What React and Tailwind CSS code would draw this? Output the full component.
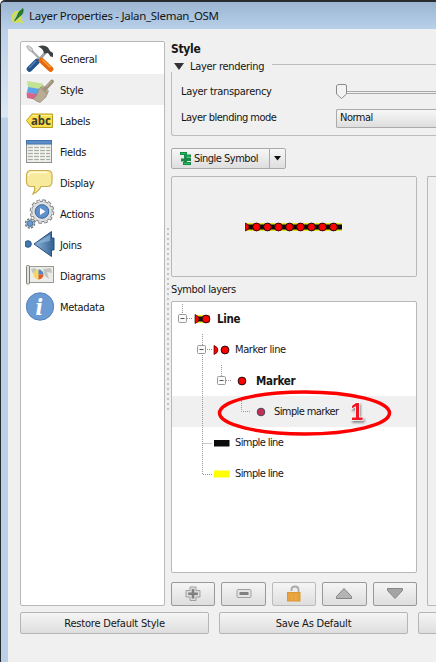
import React from "react";

function Tools() {
  return (
    <svg width="30" height="30" viewBox="0 0 30 30">
      <path d="M6 6 L15 15" stroke="#a9adb0" strokeWidth="2.2" />
      <path d="M1.5 2.500L3 1.500L7 4L8 8L4 6.500Z" fill="#d0d3d5" stroke="#8c9093" strokeWidth=".6" />
      <path d="M21 8 L13 17" stroke="#9da2a6" strokeWidth="2.800" />
      <path d="M12 17.500 L4.500 25" stroke="#24538d" strokeWidth="5.600" strokeLinecap="round" />
      <path d="M11 17 L4 24" stroke="#4d83bd" strokeWidth="1.500" />
      <path d="M16.500 16.500 L25.500 25" stroke="#e66a0a" strokeWidth="5.600" strokeLinecap="round" />
      <path d="M17 15.500 L25.500 23.500" stroke="#ff9c3c" strokeWidth="1.500" />
      <path d="M13 2.500Q19 0 23 3.500L25 7L28 9V13L25.500 12.500L23 9L19 9.500Q18.500 4.500 13 2.500Z" fill="#3c4144" />
    </svg>
  );
}
function Brush() {
  return (
    <svg width="30" height="30" viewBox="0 0 30 30">
      <path d="M2 6L18 8.500L15 14.500L3 12.500Z" fill="#c3e394" />
      <path d="M3 12L15 14L12 19.500L2 17.500Z" fill="#5aa5ea" />
      <path d="M1.500 17.500L12 19L16 26L2 23Z" fill="#d7668a" />
      <path d="M14 14L18 10.500L23.500 16L21 22L15 27.500Q10 26 8.500 23.500Q13 20 14 14Z" fill="#b8ac94" stroke="#8c826b" strokeWidth=".6" />
      <path d="M20.500 13.500L27 6.500" stroke="#9b8f76" strokeWidth="3.800" strokeLinecap="round" />
      <path d="M21 12L26.500 6" stroke="#c3b89f" strokeWidth="1" />
      <path d="M16 12.500L22 18.500" stroke="#857961" strokeWidth=".9" />
    </svg>
  );
}
function Abc() {
  return (
    <svg width="30" height="30" viewBox="0 0 30 30">
      <path d="M1.500 14.500L7 8H27.500V21.500H7Z" fill="#fbde4d" stroke="#b69c18" />
      <path d="M7.500 9.500H26.500" stroke="#fff3a2" />
      <text x="6" y="18.500" fontFamily="Noto Sans" fontWeight="bold" fontSize="11.500" letterSpacing="0" textLength="20" lengthAdjust="spacingAndGlyphs" fill="#3d3d2c">abc</text>
    </svg>
  );
}
function Table() {
  return (
    <svg width="30" height="30" viewBox="0 0 30 30">
      <rect x="1.500" y="3.500" width="25" height="22" fill="#e9ebe6" stroke="#8f928c" />
      <rect x="1.500" y="3.500" width="25" height="3.500" fill="#5c8dcb" stroke="#4472ad" />
      <path d="M3 10.500H25M3 13.500H25M3 16.500H25M3 19.500H25M3 22.500H25" stroke="#a9ada4" />
      <path d="M8.500 8V25M14.500 8V25M20.500 8V25" stroke="#f4f4f2" strokeWidth="1.200" />
    </svg>
  );
}
function Bubble() {
  return (
    <svg width="30" height="30" viewBox="0 0 30 30">
      <path d="M5 2.500H23Q27 3 27 7V14Q26.500 18.500 23 18.500H16Q14 23 8 26Q10.500 22 9.500 18.500H5Q2 18 1.500 14V7Q2 3 5 2.500Z" fill="#f7ea9c" stroke="#c9ae50" strokeWidth="1.200" />
      <path d="M3.500 8Q3.500 4.500 7 4.500H22" fill="none" stroke="#fffad2" strokeWidth="1.500" />
    </svg>
  );
}
function Gears() {
  return (
    <svg width="30" height="30" viewBox="0 0 30 30">
      <circle cx="17" cy="12.500" r="11" fill="none" stroke="#777a7d" strokeWidth="2.600" strokeDasharray="3.500 2.260" />
      <circle cx="17" cy="12.500" r="10.300" fill="#dedfe0" stroke="#77797c" />
      <circle cx="17" cy="12.500" r="10.500" fill="none" stroke="#dedfe0" strokeWidth="1.800" strokeDasharray="2.500 2.998" strokeDashoffset="-.5" />
      <circle cx="17" cy="12.500" r="6.800" fill="#5f90c9" stroke="#36679f" />
      <path d="M15 9L20.500 12.500L15 16Z" fill="#fff" />
      <circle cx="5" cy="24.500" r="4.500" fill="#dcdfe1" stroke="#777a7d" strokeWidth="1.600" strokeDasharray="2.200 1.334" />
      <circle cx="5" cy="24.500" r="2.900" fill="#6a9bd0" stroke="#4774a3" />
    </svg>
  );
}
function Join() {
  return (
    <svg width="30" height="30" viewBox="0 0 30 30">
      <defs><linearGradient id="joinBlue"><stop stopColor="#8fb7dd" /><stop offset="1" stopColor="#31608f" /></linearGradient></defs>
      <circle cx="3" cy="14" r="3.300" fill="#4479af" stroke="#2c5786" />
      <path d="M9 14L26.500 1.500V8H29V20H26.500V26.500Z" fill="url(#joinBlue)" stroke="#25507f" />
      <path d="M12 13.500L25 4.500V11Z" fill="#a8cae8" opacity=".5" />
    </svg>
  );
}
function Diagram() {
  return (
    <svg width="30" height="30" viewBox="0 0 30 30">
      <rect x="3" y="5.500" width="25.500" height="16" fill="#ecece8" stroke="#989a93" />
      <path d="M6 8L10 7L13 10L10 14L7 11ZM18 8L26 7L27 12L22 11L24 18L20 15Z" fill="#c2c5bf" />
      <rect x="1.500" y="4.500" width="3" height="18.500" rx="1" fill="#e2e2dd" stroke="#7f817b" />
      <circle cx="13.500" cy="13.500" r="5" fill="#f5d668" />
      <path d="M13.500 13.500V8.500A5 5 0 0 1 18.500 13.500Z" fill="#4f88cf" />
      <path d="M13.500 13.500H18.500A5 5 0 0 1 13.500 18.500Z" fill="#df5b34" />
    </svg>
  );
}
function Info() {
  return (
    <svg width="30" height="30" viewBox="0 0 30 30">
      <circle cx="15" cy="14.500" r="13.700" fill="#6b9bd2" stroke="#5484bc" />
      <text x="10.500" y="22.500" fontFamily="DejaVu Serif" fontStyle="italic" fontWeight="bold" fontSize="22" fill="#fff">i</text>
    </svg>
  );
}

const nav = [
  ["General", Tools], ["Style", Brush], ["Labels", Abc], ["Fields", Table], ["Display", Bubble],
  ["Actions", Gears], ["Joins", Join], ["Diagrams", Diagram], ["Metadata", Info],
];

function Swatch({ kind }) {
  return (
    <svg className="shrink-0" width="18" height="12" viewBox="0 0 18 12">
      {kind === "line" && <><path d="M1 2H16V10H1Z" fill="#f4ef22" /><path d="M1 3.500H16V8.500H1Z" fill="#111" /></>}
      {(kind === "line" || kind === "markerline") && <><path d="M1 1.500Q5 3 5 6Q5 9 1 10.500Z" fill="#f00" stroke="#410808" strokeWidth=".7" /><circle cx="12" cy="6" r="3.900" fill="#f00" stroke="#270909" /></>}
      {kind === "marker" && <circle cx="9" cy="6" r="3.900" fill="#f00" stroke="#270909" />}
      {kind === "simple" && <circle cx="9" cy="6" r="3.800" fill="#c22f52" stroke="#49455f" />}
      {kind === "black" && <rect x="1" y="3" width="15.500" height="6.500" fill="#0c0c0c" />}
      {kind === "yellow" && <rect x="1" y="2.500" width="15.500" height="7" fill="#ff0" />}
    </svg>
  );
}

const tree = [
  ["Line", "line", "pl-[22px]", "ml-[5px] font-bold text-[11.5px]"],
  ["Marker line", "markerline", "pl-[41px]", "ml-[4px] tracking-[-0.4px]"],
  ["Marker", "marker", "pl-[61px]", "ml-[5px] font-bold text-[11.5px]"],
  ["Simple marker", "simple", "pl-[80px]", "ml-[4px] tracking-[-0.6px]"],
  ["Simple line", "black", "pl-[41px]", "ml-[4px] tracking-[-0.6px]"],
  ["Simple line", "yellow", "pl-[41px]", "ml-[4px] tracking-[-0.6px]"],
];

function ToolIcon({ kind }) {
  return (
    <svg width="20" height="18" viewBox="0 0 20 18">
      {kind === "plus" && <><path d="M7 2H13V5.500H17V12H13V15.500H7V12H3V5.500H7Z" fill="#ddd" stroke="#a0a0a0" strokeLinejoin="round" /><path d="M10 4V13.500M5.200 8.800H14.800" stroke="#808080" strokeWidth="2.600" /></>}
      {kind === "minus" && <><rect x="3" y="4.500" width="14" height="8" rx="1" fill="#e4e4e4" stroke="#a0a0a0" /><path d="M5.500 8.500H14.500" stroke="#808080" strokeWidth="3" /></>}
      {kind === "lock" && <><path d="M7.500 6V4.500Q7.500 1.500 11 1.500Q14.500 1.500 14.500 5V8" fill="none" stroke="#aaa" strokeWidth="1.800" /><rect x="3.500" y="7.500" width="12.500" height="8.500" fill="#e8a23c" stroke="#dc9835" /><path d="M8 9V15.500M12 9V15.500" stroke="#f0b65c" strokeWidth=".7" /></>}
      {kind === "up" && <path d="M10 3.500L17.500 11.500V13.500H2.500V11.500Z" fill="#b4b4b4" stroke="#858585" strokeLinejoin="round" />}
      {kind === "down" && <path d="M2.500 3.500H17.500V5.500L10 13.500L2.500 5.500Z" fill="#a4a4a4" stroke="#858585" strokeLinejoin="round" />}
    </svg>
  );
}

const button = "flex shrink-0 items-center justify-center rounded-[2px] border bg-linear-to-b from-[#f5f5f5] to-[#dedede] ";

export default function App() {
  return (
    <div className="flex h-[662px] w-[436px] flex-col overflow-hidden rounded-tl-[5px] border-l border-t-2 border-[#282b30] bg-[linear-gradient(to_bottom,#b8d0ea_27px,#dce7f4_115px,#bad0e9_116px)] font-['DejaVu_Sans_Condensed','DejaVu_Sans',sans-serif] text-[11px] leading-4 font-stretch-condensed tracking-[-0.3px] text-[#151515]">
      <header className="flex h-[27px] shrink-0 items-center bg-linear-to-b from-[#9bb5d1] to-[#b8d0ea] pl-[10px]">
        <svg width="14" height="16" viewBox="0 0 14 16">
          <ellipse cx="5.500" cy="9" rx="3.800" ry="5" fill="#bdd5a0" stroke="#d3e04a" strokeWidth="2.200" transform="rotate(20 5.5 9)" />
          <path d="M3.500 13L6 8.500Q7 3.500 12 .5Q13 6 8.500 8.500Z" fill="#287d2b" stroke="#17682a" strokeWidth=".7" />
          <path d="M7 12L12 14.500" stroke="#d3e04a" strokeWidth="2" />
        </svg>
        <h1 className="ml-[4px] whitespace-nowrap pt-px font-['Noto_Sans',sans-serif] text-[11.5px] tracking-[-0.3px]">Layer Properties - Jalan_Sleman_OSM</h1>
      </header>
      <div className="ml-[7px] flex min-h-0 flex-1 flex-col bg-[#f0f0f0] pl-[12px] pt-[12px]">
        <div className="flex h-[565px] shrink-0">
          <nav className="flex w-[145px] shrink-0 flex-col rounded-[2px] border-[1.5px] border-[#b8b8b8] bg-white pt-px">
            {nav.map(([name, Icon]) => (
              <div key={name} className={"flex h-[31.1px] shrink-0 items-center gap-[5px] pl-[4px] " + (name === "Style" ? "bg-[#f0f0f0]" : "")}>
                <Icon /><span className="pt-[2px]">{name}</span>
              </div>
            ))}
          </nav>
          <div className="flex w-[6px] shrink-0 justify-center pt-[187px]">
            <div className="h-[183px] w-[2px] bg-[repeating-linear-gradient(to_bottom,#c4c4c4_0_2px,transparent_2px_5px)]" />
          </div>
          <main className="flex min-w-0 flex-1 flex-col">
            <h2 className="h-[16px] shrink-0 text-[12px] font-bold tracking-[-0.3px]">Style</h2>
            <section className="flex h-[79px] shrink-0 flex-col">
              <div className="flex h-[19px] items-center">
                <svg className="ml-[3px]" width="10" height="7" viewBox="0 0 10 7"><path d="M0 0H10L5 7Z" fill="#333" /></svg>
                <span className="ml-[6px] w-[82px] whitespace-nowrap pt-px">Layer rendering</span>
                <div className="mb-[5px] h-px flex-1 bg-[#bcbcbc]" />
              </div>
              <div className="mt-[-4px] flex h-[64px] flex-col rounded-bl-[3px] border-b border-l border-[#bcbcbc] pl-[9px] pt-[10px]">
                <div className="flex h-[20px] items-center">
                  <span className="w-[155px] whitespace-nowrap">Layer transparency</span>
                  <svg width="100" height="18" viewBox="0 0 100 18"><path d="M10 8.500H100M10 10.500H100" stroke="#a9a9a9" /><path d="M.500 3Q1 1.500 3 1.500H9Q10.500 1.500 10.500 3V11L5.500 15.500L.500 11Z" fill="#f3f3f3" stroke="#8a8a8a" /></svg>
                </div>
                <div className="mt-[6px] flex h-[20px] items-center">
                  <span className="w-[155px] whitespace-nowrap tracking-[-0.5px]">Layer blending mode</span>
                  <div className="flex h-[19px] flex-1 items-center rounded-l-[2px] border border-r-0 border-[#aaa] bg-linear-to-b from-[#f7f7f7] to-[#dedede] pl-[3px] tracking-[-0.5px]">Normal</div>
                </div>
              </div>
            </section>
            <div className="mt-[12px] flex h-[21px] w-[115px] shrink-0 items-center rounded-[2px] border border-[#aaa] bg-linear-to-b from-[#f7f7f7] to-[#dedede]">
              <svg className="ml-[8px]" width="11" height="15" viewBox="0 0 11 15"><path d="M0 2.500H7M4 5H11M1 9H6M5 8.500H11M3 12.500H11M5.500 2V13" stroke="#188844" strokeWidth="2.800" /><path d="M1 2.500H6M5 5H10M4 12.500H10" stroke="#1ec369" /></svg>
              <span className="ml-[3px] w-[75px] whitespace-nowrap tracking-[-0.5px]">Single Symbol</span>
              <div className="flex h-full flex-1 items-center justify-center border-l border-[#aaa]"><svg width="7" height="5" viewBox="0 0 7 5"><path d="M0 0H7L3.500 4.500Z" fill="#111" /></svg></div>
            </div>
            <div className="mt-[7px] flex h-[430px] gap-[10px]">
              <div className="flex w-[246px] shrink-0 flex-col">
                <div className="flex h-[101px] shrink-0 rounded-[2px] border-[1.5px] border-[#b8b8b8] pl-[73px] pt-[45px]">
                  <svg width="98" height="10" viewBox="0 0 98 10">
                    <path d="M0 1H97V9H0Z" fill="#dfe526" /><path d="M0 2.500H97V7.500H0Z" fill="#080808" />
                    <path d="M0 1Q4 2 4 5Q4 8 0 9Z" fill="#f00" stroke="#290909" strokeWidth=".7" />
                    {[11.5, 22.5, 33.5, 44.5, 55.5, 66.5, 77.5, 88.5].map((x) => <circle key={x} cx={x} cy="5" r="3.900" fill="#f00" stroke="#250707" />)}
                  </svg>
                </div>
                <h3 className="mt-[5px] h-[19px] shrink-0 tracking-[-0.4px]">Symbol layers</h3>
                <div className="relative flex h-[272px] shrink-0 flex-col rounded-[2px] border-[1.5px] border-[#b8b8b8] bg-white pt-px">
                  {tree.map(([name, kind, indent, style], i) => (
                    <div key={i} className={"flex h-[31.1px] shrink-0 items-center whitespace-nowrap " + indent + (i === 3 ? " bg-[#f0f0f0]" : "")}>
                      <Swatch kind={kind} /><span className={style}>{name}</span>
                    </div>
                  ))}
                  <svg className="absolute left-0 top-0" width="240" height="190" viewBox="0 0 240 190" fill="none">
                    <g stroke="#999" strokeDasharray="1 1">
                      <path d="M10.500 2V12M15 16.500H21M30.500 32V43M30.500 53V172.500H40M35 47.500H40M30.500 141.500H40M49.500 63V74M54 78.500H60M69.500 95V109.500H79" />
                    </g>
                    <g fill="#fafafa" stroke="#999"><rect x="6.500" y="12.500" width="8" height="8" rx="1" /><rect x="25.500" y="43.500" width="8" height="8" rx="1" /><rect x="45.500" y="74.500" width="8" height="8" rx="1" /></g>
                    <path d="M8.500 16.500H12.500M27.500 47.500H31.500M47.500 78.500H51.500" stroke="#555" />
                    <ellipse cx="132.500" cy="111" rx="85" ry="21" stroke="#f00" strokeWidth="3.500" />
                    <text x="178.500" y="118" fill="#f01824" stroke="#fff" strokeWidth="1.600" paintOrder="stroke" fontFamily="Liberation Sans" fontWeight="bold" fontSize="23" className="drop-shadow-[1px_2px_1px_#888]">1</text>
                  </svg>
                </div>
                <div className="mt-[9px] flex h-[25px] gap-[6px]">
                  {["plus", "minus", "lock", "up", "down"].map((kind) => <div key={kind} className={button + "w-[44.4px] " + (kind === "lock" ? "border-[#bbb]" : "border-[#999]")}><ToolIcon kind={kind} /></div>)}
                </div>
              </div>
              <div className="flex-1 rounded-l-[2px] border-[1.5px] border-r-0 border-[#b8b8b8]" />
            </div>
          </main>
        </div>
        <footer className="mt-[6px] flex h-[22px] shrink-0 gap-[10px] tracking-[-0.2px]">
          <div className={button + "w-[189px] border-[#b5b5b5] pt-px"}>Restore Default Style</div>
          <div className={button + "w-[189px] border-[#b5b5b5] pt-px"}>Save As Default</div>
          <div className={button + "w-[40px] border-[#b5b5b5]"} />
        </footer>
      </div>
    </div>
  );
}
